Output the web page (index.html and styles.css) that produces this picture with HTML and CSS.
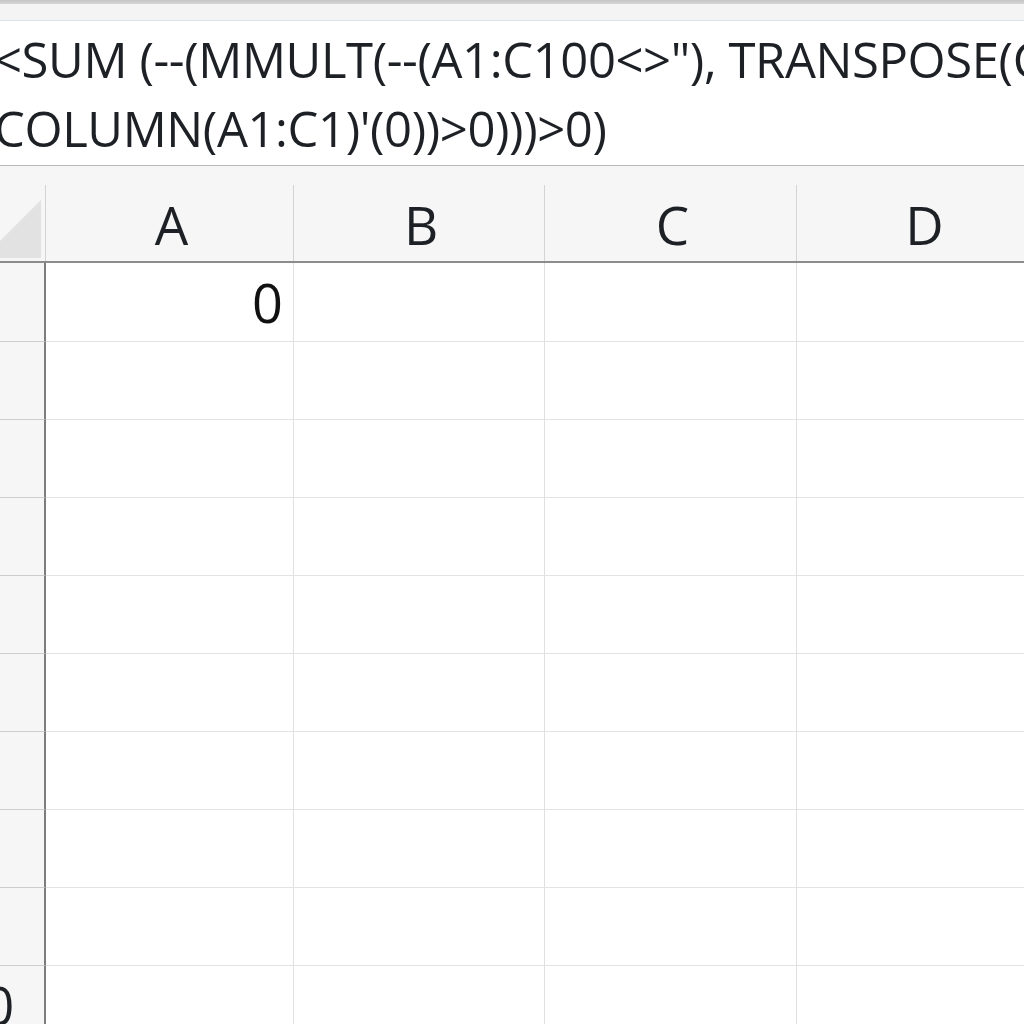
FILE: index.html
```html
<!DOCTYPE html>
<html>
<head>
<meta charset="utf-8">
<link rel="stylesheet" href="styles.css">
</head>
<body>
<div class="app">
  <div class="topbar"></div>
  <div class="strip"></div>
  <div class="formula">
    <div class="fline l1">&lt;SUM (--(MMULT(--(A1:C100&lt;&gt;"), TRANSPOSE(COLUMN</div>
    <div class="fline l2">COLUMN(A1:C1)'(0))&gt;0)))&gt;0)</div>
  </div>
  <div class="sheet">
    <div class="corner"><span class="tri"></span></div>
    <div class="ch">A</div>
    <div class="ch">B</div>
    <div class="ch">C</div>
    <div class="ch">D</div>

    <div class="rh first">1</div>
    <div class="cell first num">0</div>
    <div class="cell first"></div>
    <div class="cell first"></div>
    <div class="cell first"></div>

    <div class="rh">2</div><div class="cell"></div><div class="cell"></div><div class="cell"></div><div class="cell"></div>
    <div class="rh">3</div><div class="cell"></div><div class="cell"></div><div class="cell"></div><div class="cell"></div>
    <div class="rh">4</div><div class="cell"></div><div class="cell"></div><div class="cell"></div><div class="cell"></div>
    <div class="rh">5</div><div class="cell"></div><div class="cell"></div><div class="cell"></div><div class="cell"></div>
    <div class="rh">6</div><div class="cell"></div><div class="cell"></div><div class="cell"></div><div class="cell"></div>
    <div class="rh">7</div><div class="cell"></div><div class="cell"></div><div class="cell"></div><div class="cell"></div>
    <div class="rh">8</div><div class="cell"></div><div class="cell"></div><div class="cell"></div><div class="cell"></div>
    <div class="rh">9</div><div class="cell"></div><div class="cell"></div><div class="cell"></div><div class="cell"></div>
    <div class="rh">10</div><div class="cell"></div><div class="cell"></div><div class="cell"></div><div class="cell"></div>
  </div>
</div>
</body>
</html>
```

FILE: styles.css
```css
* { box-sizing: border-box; }
html, body { margin: 0; padding: 0; background: #ffffff; }
body { width: 1024px; height: 1024px; overflow: hidden; font-family: "Open Sans", "Noto Sans", sans-serif; color: #1d2126; }
.app { width: 1024px; overflow: hidden; }
.topbar { height: 4px; background: linear-gradient(#c4c4c4, #d6d6d6); }
.strip { height: 17px; background: #f4f4f4; border-bottom: 1px solid #dbe2ea; }
.formula { height: 145px; background: #ffffff; border-bottom: 1px solid #b8b8b8; padding-top: 4px; overflow: hidden; }
.fline { white-space: nowrap; font-size: 49px; line-height: 69px; letter-spacing: -0.4px; }
.l1 { margin-left: -6px; }
.l2 { margin-left: -6px; }
.sheet { display: grid; grid-template-columns: 46px 248px 251px 252px 252px; grid-template-rows: 97px 79px repeat(9, 78px); width: 1049px; }
.corner { position: relative; background: #f6f6f6; border-bottom: 2px solid #8c8c8c; overflow: hidden; }
.corner::after { content: ""; position: absolute; right: 0; top: 19px; bottom: 0; width: 1px; background: #d4d4d4; }
.tri { position: absolute; right: 5px; bottom: 3px; width: 0; height: 0; border-left: 58px solid transparent; border-bottom: 58px solid #e2e2e2; }
.ch { position: relative; background: #f6f6f6; border-bottom: 2px solid #8c8c8c; display: flex; align-items: flex-end; justify-content: center; font-size: 53px; line-height: 1; padding-bottom: 10px; padding-left: 3px; }
.ch::after { content: ""; position: absolute; right: 0; top: 19px; bottom: 0; width: 1px; background: #d4d4d4; }
.rh { background: #f6f6f6; border-right: 2px solid #7d7d7d; border-bottom: 1px solid #cdcdcd; margin-left: -64px; width: 110px; text-align: center; font-size: 53px; line-height: 78px; overflow: hidden; text-indent: -12px; }
.cell { border-right: 1px solid #e0e0e0; border-bottom: 1px solid #e3e3e3; background: #fff; }
.num { display: flex; align-items: center; justify-content: flex-end; padding-right: 10px; font-size: 54px; color: #111; }
```
